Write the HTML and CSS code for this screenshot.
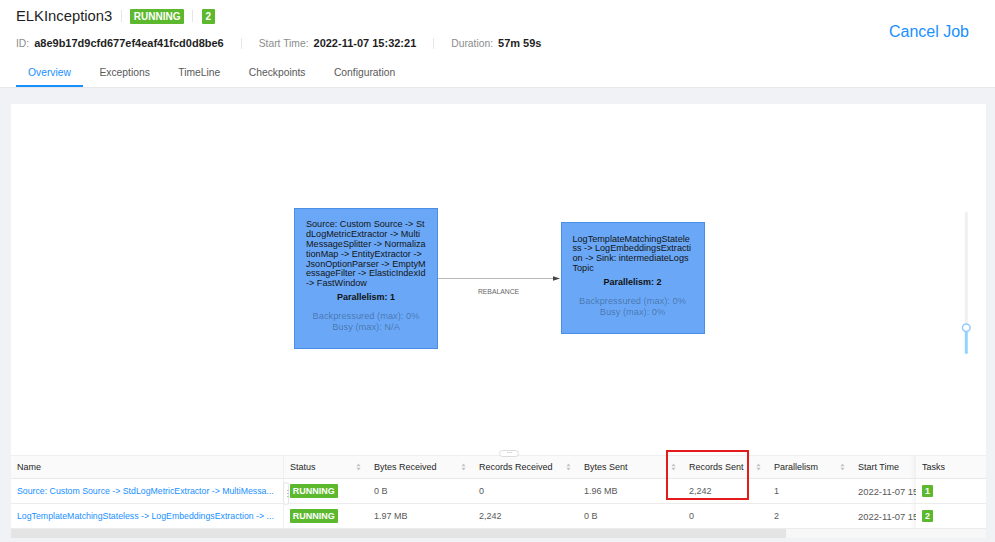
FILE: index.html
```html
<!DOCTYPE html>
<html lang="en">
<head>
<meta charset="utf-8">
<title>ELKInception3</title>
<link rel="stylesheet" href="styles.css">
</head>
<body>
<header class="job-header">
  <div class="job-top">
    <div class="job-summary">
      <div class="title-row">
        <h1 class="job-name">ELKInception3</h1>
        <span class="vdiv"></span>
        <span class="tag tag-head">RUNNING</span>
        <span class="vdiv"></span>
        <span class="tag tag-head">2</span>
      </div>
      <div class="info-row">
        <div class="info-item"><span class="info-label">ID:</span><span class="info-value">a8e9b17d9cfd677ef4eaf41fcd0d8be6</span></div>
        <span class="vdiv info-div"></span>
        <div class="info-item"><span class="info-label">Start Time:</span><span class="info-value">2022-11-07 15:32:21</span></div>
        <span class="vdiv info-div"></span>
        <div class="info-item"><span class="info-label">Duration:</span><span class="info-value">57m 59s</span></div>
      </div>
    </div>
    <a class="cancel-job">Cancel Job</a>
  </div>
  <nav class="tabs">
    <a class="tab active">Overview</a>
    <a class="tab">Exceptions</a>
    <a class="tab">TimeLine</a>
    <a class="tab">Checkpoints</a>
    <a class="tab">Configuration</a>
  </nav>
</header>

<main class="content">
  <section class="card">
    <div class="graph">
      <svg class="graph-svg" width="975" height="351" viewBox="0 0 975 351">
        <line x1="427" y1="174.5" x2="544" y2="174.5" stroke="#b8b8b8" stroke-width="1"/>
        <polygon points="549,174.5 542,172.3 542,176.7" fill="#444"/>
        <text x="487.5" y="189.5" text-anchor="middle" class="edge-label">REBALANCE</text>
        <line x1="955.3" y1="109" x2="955.3" y2="219" stroke="#f0f0f0" stroke-width="3" stroke-linecap="round"/>
        <line x1="955.3" y1="228.5" x2="955.3" y2="248.5" stroke="#91d5ff" stroke-width="3" stroke-linecap="round"/>
        <circle cx="955.3" cy="223.7" r="3.8" fill="#fff" stroke="#91caff" stroke-width="1.5"/>
      </svg>
      <div class="node node-src">
        <div class="node-name">Source: Custom Source -&gt; St<br>dLogMetricExtractor -&gt; Multi<br>MessageSplitter -&gt; Normaliza<br>tionMap -&gt; EntityExtractor -&gt;<br>JsonOptionParser -&gt; EmptyM<br>essageFilter -&gt; ElasticIndexId<br>-&gt; FastWindow</div>
        <div class="node-par">Parallelism: 1</div>
        <div class="node-metrics">Backpressured (max): 0%<br>Busy (max): N/A</div>
      </div>
      <div class="node node-sink">
        <div class="node-name">LogTemplateMatchingStatele<br>ss -&gt; LogEmbeddingsExtracti<br>on -&gt; Sink: intermediateLogs<br>Topic</div>
        <div class="node-par">Parallelism: 2</div>
        <div class="node-metrics">Backpressured (max): 0%<br>Busy (max): 0%</div>
      </div>
      <div class="resize-handle">···</div>
    </div>

    <div class="table-wrap">
      <table class="vertex-table">
        <colgroup>
          <col class="c-name"><col class="c-status"><col class="c-wide"><col class="c-wide"><col class="c-wide"><col class="c-rs"><col class="c-par"><col class="c-start"><col class="c-tasks">
        </colgroup>
        <thead>
          <tr>
            <th class="name">Name</th>
            <th class="sortable"><div class="th-inner"><span>Status</span><svg class="sorter" viewBox="0 0 6 10"><path d="M3 0.5L5.6 4H0.4z M3 9.5L0.4 6h5.2z"/></svg></div></th>
            <th class="sortable"><div class="th-inner"><span>Bytes Received</span><svg class="sorter" viewBox="0 0 6 10"><path d="M3 0.5L5.6 4H0.4z M3 9.5L0.4 6h5.2z"/></svg></div></th>
            <th class="sortable"><div class="th-inner"><span>Records Received</span><svg class="sorter" viewBox="0 0 6 10"><path d="M3 0.5L5.6 4H0.4z M3 9.5L0.4 6h5.2z"/></svg></div></th>
            <th class="sortable"><div class="th-inner"><span>Bytes Sent</span><svg class="sorter" viewBox="0 0 6 10"><path d="M3 0.5L5.6 4H0.4z M3 9.5L0.4 6h5.2z"/></svg></div></th>
            <th class="sortable"><div class="th-inner"><span>Records Sent</span><svg class="sorter" viewBox="0 0 6 10"><path d="M3 0.5L5.6 4H0.4z M3 9.5L0.4 6h5.2z"/></svg></div></th>
            <th class="sortable"><div class="th-inner"><span>Parallelism</span><svg class="sorter" viewBox="0 0 6 10"><path d="M3 0.5L5.6 4H0.4z M3 9.5L0.4 6h5.2z"/></svg></div></th>
            <th class="clip">Start Time</th>
            <th class="tasks">Tasks</th>
          </tr>
        </thead>
        <tbody>
          <tr>
            <td class="name"><a class="vertex-link" title="Source: Custom Source -> StdLogMetricExtractor -> MultiMessageSplitter -> NormalizationMap -> EntityExtractor -> JsonOptionParser -> EmptyMessageFilter -> ElasticIndexId -> FastWindow">Source: Custom Source -&gt; StdLogMetricExtractor -&gt; MultiMessa...</a></td>
            <td><span class="tag tag-row">RUNNING</span></td>
            <td>0 B</td>
            <td>0</td>
            <td>1.96 MB</td>
            <td>2,242</td>
            <td>1</td>
            <td class="clip">2022-11-07 15:32:21</td>
            <td class="tasks"><span class="tag tag-task">1</span></td>
          </tr>
          <tr>
            <td class="name"><a class="vertex-link" title="LogTemplateMatchingStateless -> LogEmbeddingsExtraction -> Sink: intermediateLogsTopic">LogTemplateMatchingStateless -&gt; LogEmbeddingsExtraction -&gt; ...</a></td>
            <td><span class="tag tag-row">RUNNING</span></td>
            <td>1.97 MB</td>
            <td>2,242</td>
            <td>0 B</td>
            <td>0</td>
            <td>2</td>
            <td class="clip">2022-11-07 15:32:21</td>
            <td class="tasks"><span class="tag tag-task">2</span></td>
          </tr>
        </tbody>
      </table>
      <span class="col-grip">⋮</span>
      <div class="hscroll"><div class="hscroll-thumb"></div></div>
    </div>
    <div class="annot"></div>
  </section>
</main>
</body>
</html>
```

FILE: styles.css
```css
html, body {
  margin: 0;
  padding: 0;
}
body {
  font-family: "Liberation Sans", Arial, sans-serif;
  background: #f0f2f5;
  height: 542px;
  overflow: hidden;
  color: #262626;
}

/* ---------- header ---------- */
.job-header {
  background: #fff;
  border-bottom: 1px solid #e8e8e8;
}
.job-top {
  display: flex;
  justify-content: space-between;
  align-items: flex-start;
  padding: 5px 26px 0 16px;
}
.title-row {
  display: flex;
  align-items: center;
  height: 22px;
}
.job-name {
  margin: 0;
  font-size: 14.8px;
  font-weight: 400;
  line-height: 22px;
  color: #1f1f1f;
}
.vdiv {
  width: 1px;
  height: 12px;
  background: #e6e6e6;
}
.title-row .vdiv {
  margin: 0 8.5px;
}
.tag {
  display: inline-block;
  color: #fff;
  background: #5cb82c;
  font-weight: 700;
  text-align: center;
  border-radius: 1px;
}
.tag-head {
  height: 15px;
  line-height: 15px;
  font-size: 10px;
  padding: 0 3.5px;
}
.info-row {
  display: flex;
  align-items: center;
  height: 16px;
  margin-top: 8px;
}
.info-item {
  display: flex;
  align-items: baseline;
  gap: 5px;
}
.info-label {
  font-size: 10.3px;
  color: #8c8c8c;
}
.info-value {
  font-size: 11px;
  font-weight: 700;
  color: #1f1f1f;
}
.info-div {
  height: 11px;
  margin: 0 17px;
}
.cancel-job {
  margin-top: 17px;
  font-size: 16px;
  line-height: 20px;
  color: #1890ff;
  cursor: pointer;
}
.tabs {
  display: flex;
  gap: 4.5px;
  padding-left: 16px;
  margin-top: 7px;
}
.tab {
  font-size: 10.3px;
  line-height: 14px;
  padding: 8px 12px 5px;
  color: #595959;
  border-bottom: 2px solid transparent;
  cursor: pointer;
}
.tab.active {
  color: #1890ff;
  border-bottom-color: #1890ff;
}

/* ---------- content ---------- */
.content {
  padding: 16px 9px 0 11px;
}
.card {
  position: relative;
  background: #fff;
}
.graph {
  position: relative;
  height: 351px;
}
.graph-svg {
  position: absolute;
  left: 0;
  top: 0;
}
.edge-label {
  font-family: "Liberation Sans", Arial, sans-serif;
  font-size: 6.8px;
  fill: #666;
}
.node {
  position: absolute;
  box-sizing: border-box;
  width: 144px;
  background: #6aa8f7;
  border: 1px solid #4a8fe6;
  padding: 0 11px 4px;
  display: flex;
  flex-direction: column;
  justify-content: center;
  font-size: 9.1px;
  color: #141414;
}
.node-src {
  left: 283px;
  top: 104px;
  height: 141px;
}
.node-sink {
  left: 549.5px;
  top: 118px;
  height: 112px;
}
.node-name {
  line-height: 9.8px;
  white-space: nowrap;
}
.node-par {
  margin-top: 3px;
  font-size: 9px;
  font-weight: 700;
  line-height: 10.8px;
  text-align: center;
  color: #111;
}
.node-metrics {
  margin-top: 8.5px;
  font-size: 9.3px;
  line-height: 10.7px;
  text-align: center;
  color: rgba(0, 0, 0, 0.33);
}
.resize-handle {
  position: absolute;
  left: 488px;
  top: 346px;
  z-index: 3;
  box-sizing: border-box;
  width: 20px;
  height: 7px;
  border: 1px solid #dcdcdc;
  border-radius: 4px;
  background: #fff;
  font-size: 7px;
  line-height: 3px;
  text-align: center;
  color: #9a9a9a;
  letter-spacing: -0.5px;
}

/* ---------- table ---------- */
.table-wrap {
  position: relative;
}
.vertex-table {
  width: 975px;
  table-layout: fixed;
  border-collapse: separate;
  border-spacing: 0;
  font-size: 9px;
}
.c-name { width: 273px; }
.c-status { width: 84px; }
.c-wide { width: 105px; }
.c-rs { width: 85px; }
.c-par { width: 84px; }
.c-start { width: 64px; }
.c-tasks { width: 70px; }

.vertex-table th {
  box-sizing: border-box;
  height: 24px;
  padding: 0 6px;
  background: #fafafa;
  border-top: 1px solid #efefef;
  border-bottom: 1px solid #e8e8e8;
  text-align: left;
  font-weight: 400;
  color: #262626;
  white-space: nowrap;
}
.vertex-table th.sortable {
  padding: 0 7px 0 6px;
}
.th-inner {
  display: flex;
  justify-content: space-between;
  align-items: center;
}
.sorter {
  width: 5px;
  height: 8px;
  fill: #c4c4c4;
  flex: none;
}
.vertex-table td {
  box-sizing: border-box;
  height: 25px;
  padding: 0 6px;
  border-bottom: 1px solid #ececec;
  color: #595959;
  white-space: nowrap;
}
.vertex-table td.name,
.vertex-table th.name {
  border-right: 1px solid #efefef;
}
.vertex-link {
  display: block;
  overflow: hidden;
  text-overflow: ellipsis;
  white-space: nowrap;
  font-size: 8.75px;
  color: #1890ff;
}
.vertex-table .clip {
  overflow: hidden;
  text-overflow: clip;
  font-size: 9.4px;
}
.vertex-table th.clip {
  font-size: 9px;
}
.vertex-table .tasks {
  position: relative;
}
.vertex-table .tasks::before {
  content: "";
  position: absolute;
  left: -6px;
  top: 0;
  bottom: 0;
  width: 6px;
  background: linear-gradient(to right, rgba(0, 0, 0, 0), rgba(0, 0, 0, 0.045));
}
.tag-row {
  height: 14px;
  line-height: 14px;
  font-size: 9px;
  padding: 0 2.8px;
  vertical-align: middle;
}
.tag-task {
  height: 12px;
  line-height: 12px;
  font-size: 9px;
  padding: 0 3px;
  vertical-align: middle;
}
.col-grip {
  position: absolute;
  left: 271.5px;
  top: 27px;
  box-sizing: border-box;
  width: 6px;
  height: 23px;
  border: 1px solid #e6e6e6;
  border-radius: 3px;
  background: #fff;
  font-family: "DejaVu Sans", sans-serif;
  font-size: 8px;
  line-height: 21px;
  text-align: center;
  color: #8c8c8c;
}
.hscroll {
  height: 9px;
  background: #f7f7f7;
}
.hscroll-thumb {
  width: 775px;
  height: 100%;
  background: #e4e4e4;
}

/* annotation overlay */
.annot {
  position: absolute;
  left: 655px;
  top: 346px;
  width: 83px;
  height: 50px;
  box-sizing: border-box;
  border: 2px solid #e31b1b;
  pointer-events: none;
}
```
